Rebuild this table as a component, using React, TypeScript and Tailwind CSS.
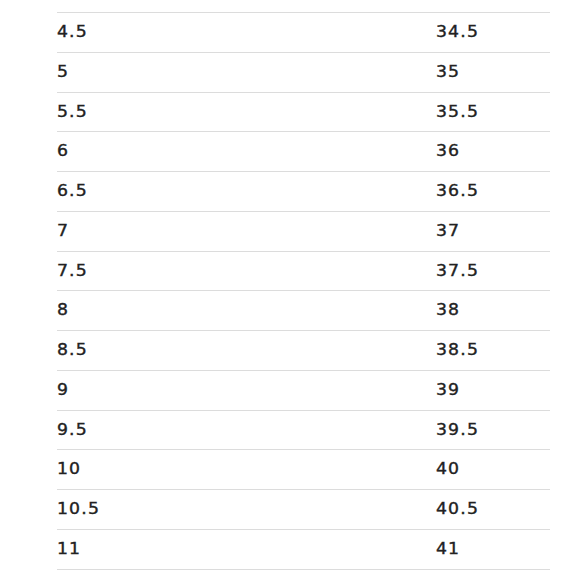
import React from "react";

const rows: [string, string][] = [
  ["4.5", "34.5"],
  ["5", "35"],
  ["5.5", "35.5"],
  ["6", "36"],
  ["6.5", "36.5"],
  ["7", "37"],
  ["7.5", "37.5"],
  ["8", "38"],
  ["8.5", "38.5"],
  ["9", "39"],
  ["9.5", "39.5"],
  ["10", "40"],
  ["10.5", "40.5"],
  ["11", "41"],
  ["11.5", "41.5"],
  ["12", "42"],
];

export default function App() {
  return (
    <div className="w-[580px] h-[580px] overflow-hidden bg-white pt-[12px] pl-[57px]">
      <div
        className="w-[493px] text-[#222222] text-[15px] font-normal [-webkit-text-stroke:0.35px_#222222]"
        style={{ fontFamily: '"DejaVu Sans", sans-serif' }}
      >
        {rows.map(([a, b]) => (
          <div
            key={a}
            className="flex items-center h-[39.75px] border-t border-[#dcdcdc] tracking-[1px]"
          >
            <div className="w-[379px]">
              <span className="inline-block origin-left scale-x-[1.15]">{a}</span>
            </div>
            <div>
              <span className="inline-block origin-left scale-x-[1.15]">{b}</span>
            </div>
          </div>
        ))}
      </div>
    </div>
  );
}
